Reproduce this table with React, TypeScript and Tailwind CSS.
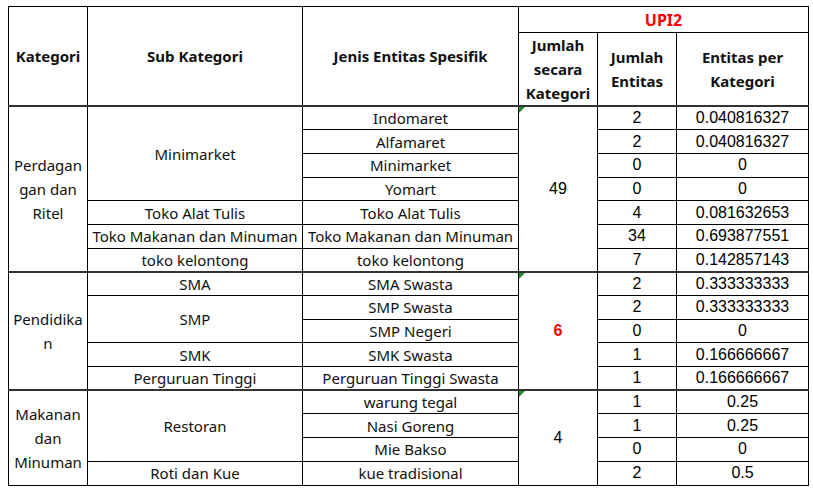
import React from "react";

interface Row {
  jenis: string;
  jumlah: string;
  entitas: string;
  sub?: { label: string; span: number };
}

interface Section {
  kategori: string[];
  total: string;
  totalRed?: boolean;
  rows: Row[];
}

const sections: Section[] = [
  {
    kategori: ["Perdagan", "gan dan", "Ritel"],
    total: "49",
    rows: [
      { jenis: "Indomaret", jumlah: "2", entitas: "0.040816327", sub: { label: "Minimarket", span: 4 } },
      { jenis: "Alfamaret", jumlah: "2", entitas: "0.040816327" },
      { jenis: "Minimarket", jumlah: "0", entitas: "0" },
      { jenis: "Yomart", jumlah: "0", entitas: "0" },
      { jenis: "Toko Alat Tulis", jumlah: "4", entitas: "0.081632653", sub: { label: "Toko Alat Tulis", span: 1 } },
      {
        jenis: "Toko Makanan dan Minuman",
        jumlah: "34",
        entitas: "0.693877551",
        sub: { label: "Toko Makanan dan Minuman", span: 1 },
      },
      { jenis: "toko kelontong", jumlah: "7", entitas: "0.142857143", sub: { label: "toko kelontong", span: 1 } },
    ],
  },
  {
    kategori: ["Pendidika", "n"],
    total: "6",
    totalRed: true,
    rows: [
      { jenis: "SMA Swasta", jumlah: "2", entitas: "0.333333333", sub: { label: "SMA", span: 1 } },
      { jenis: "SMP Swasta", jumlah: "2", entitas: "0.333333333", sub: { label: "SMP", span: 2 } },
      { jenis: "SMP Negeri", jumlah: "0", entitas: "0" },
      { jenis: "SMK Swasta", jumlah: "1", entitas: "0.166666667", sub: { label: "SMK", span: 1 } },
      {
        jenis: "Perguruan Tinggi Swasta",
        jumlah: "1",
        entitas: "0.166666667",
        sub: { label: "Perguruan Tinggi", span: 1 },
      },
    ],
  },
  {
    kategori: ["Makanan", "dan", "Minuman"],
    total: "4",
    rows: [
      { jenis: "warung tegal", jumlah: "1", entitas: "0.25", sub: { label: "Restoran", span: 3 } },
      { jenis: "Nasi Goreng", jumlah: "1", entitas: "0.25" },
      { jenis: "Mie Bakso", jumlah: "0", entitas: "0" },
      { jenis: "kue tradisional", jumlah: "2", entitas: "0.5", sub: { label: "Roti dan Kue", span: 1 } },
    ],
  },
];

const cell = "border border-black p-0 text-center align-middle";
const num = "font-['Liberation_Sans',Arial,sans-serif] text-[16px]";
const thick = " border-b-2 border-b-[#333]";

export default function App() {
  return (
    <div className="min-h-[490px] w-[813px] bg-white pl-[8px] pt-[6px] font-['Noto_Sans',sans-serif] text-[15px] text-[#111]">
      <table className="table-fixed border-collapse">
        <colgroup>
          <col className="w-[79px]" />
          <col className="w-[215px]" />
          <col className="w-[216px]" />
          <col className="w-[79px]" />
          <col className="w-[79px]" />
          <col className="w-[132px]" />
        </colgroup>
        <thead className="font-bold">
          <tr className="h-[26px]">
            <th rowSpan={2} className={cell + thick}>
              Kategori
            </th>
            <th rowSpan={2} className={cell + thick}>
              Sub Kategori
            </th>
            <th rowSpan={2} className={cell + thick}>
              Jenis Entitas Spesifik
            </th>
            <th colSpan={3} className={cell + " text-[16px] text-[#ff0000]"}>
              UPI2
            </th>
          </tr>
          <tr className="h-[71px] leading-[24px]">
            <th className={cell + thick}>
              Jumlah
              <br />
              secara
              <br />
              Kategori
            </th>
            <th className={cell + thick}>
              Jumlah
              <br />
              Entitas
            </th>
            <th className={cell + thick}>
              Entitas per
              <br />
              Kategori
            </th>
          </tr>
        </thead>
        {sections.map((s, si) => {
          const notLast = si < sections.length - 1;
          return (
            <tbody key={si}>
              {s.rows.map((r, ri) => {
                const b = ri === s.rows.length - 1 && notLast ? thick : "";
                return (
                  <tr key={ri} className="h-[23.7px] leading-[22px]">
                    {ri === 0 && (
                      <td rowSpan={s.rows.length} className={cell + (notLast ? thick : "") + " leading-[24px]"}>
                        {s.kategori.map((k, ki) => (
                          <div key={ki}>{k}</div>
                        ))}
                      </td>
                    )}
                    {r.sub && (
                      <td
                        rowSpan={r.sub.span}
                        className={
                          cell + " whitespace-nowrap" + (ri + r.sub.span === s.rows.length && notLast ? thick : "")
                        }
                      >
                        {r.sub.label}
                      </td>
                    )}
                    <td className={cell + " whitespace-nowrap" + b}>{r.jenis}</td>
                    {ri === 0 && (
                      <td
                        rowSpan={s.rows.length}
                        className={
                          cell +
                          " relative " +
                          num +
                          (s.totalRed ? " font-bold text-[#ff0000]" : " text-black") +
                          (notLast ? thick : "")
                        }
                      >
                        <span className="absolute left-0 top-0 h-0 w-0 border-r-[6px] border-t-[6px] border-r-transparent border-t-[#1f8b2c]" />
                        {s.total}
                      </td>
                    )}
                    <td className={cell + " text-black " + num + b}>{r.jumlah}</td>
                    <td className={cell + " text-black " + num + b}>{r.entitas}</td>
                  </tr>
                );
              })}
            </tbody>
          );
        })}
      </table>
    </div>
  );
}
